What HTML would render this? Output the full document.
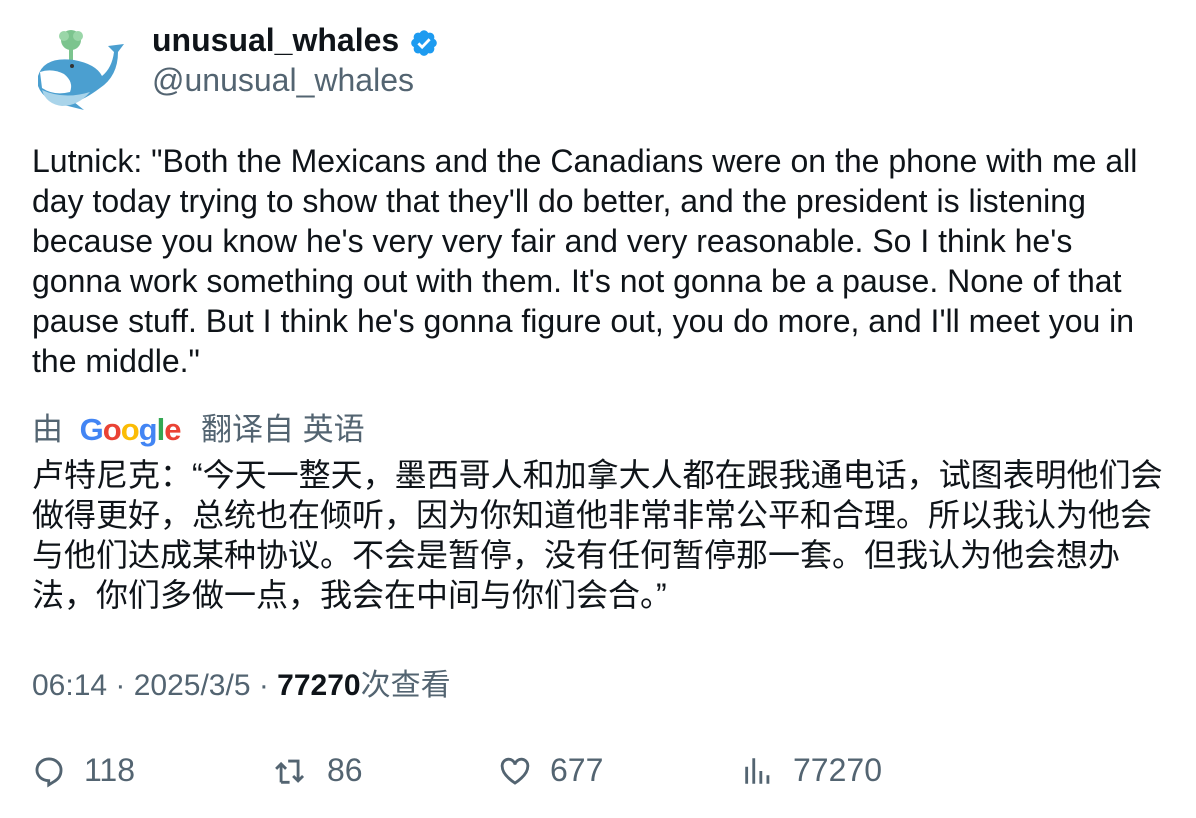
<!DOCTYPE html>
<html><head><meta charset="utf-8"><style>
body{margin:0;background:#fff;width:1196px;height:818px;overflow:hidden;font-family:"Liberation Sans","Noto Sans CJK SC",sans-serif;color:#0f1419}
.abs{position:absolute;white-space:nowrap}
.g{color:#536471}
.body{position:absolute;left:32px;top:141px;width:1112px;font-size:32px;line-height:40px}
.zh{position:absolute;left:32px;top:455px;width:1140px;font-size:32px;line-height:40px}
.st{position:absolute;top:752px;font-size:32px;color:#536471;display:flex;align-items:center;gap:18px}
</style></head><body>
<svg class="abs" style="left:34px;top:26px" width="92" height="84" viewBox="0 0 92 84">
<circle cx="37" cy="14" r="10" fill="#7cc48e"/><circle cx="30" cy="10" r="5" fill="#9ad6a8"/><circle cx="44" cy="10" r="5" fill="#9ad6a8"/>
<rect x="35" y="20" width="4" height="14" fill="#7cc48e"/>
<path d="M4 50 Q10 30 40 34 Q62 38 68 50 Q78 42 80 26 L74 20 L90 18 L84 26 Q84 50 66 62 Q50 74 40 76 L50 84 L34 80 Q10 76 4 60 Z" fill="#4b9fd0"/>
<path d="M6 46 Q18 42 30 48 Q40 56 36 66 Q20 70 8 62 Z" fill="#fff"/>
<path d="M8 64 Q30 74 56 66 Q44 80 28 80 Q12 78 8 64Z" fill="#a9d4ea"/>
<circle cx="38" cy="40" r="2" fill="#333"/>
</svg>
<div class="abs" style="left:152px;top:22px;font-size:32px;font-weight:bold">unusual_whales</div>
<svg class="abs" style="left:409px;top:28px" width="30" height="30" viewBox="0 0 24 24"><path fill="#1d9bf0" d="M22.25 12c0-1.430-.88-2.670-2.190-3.340.46-1.390.2-2.900-.81-3.910s-2.520-1.270-3.910-.81c-.66-1.310-1.910-2.190-3.340-2.190s-2.670.88-3.330 2.190c-1.400-.46-2.910-.2-3.920.81s-1.260 2.520-.8 3.910c-1.310.67-2.200 1.910-2.200 3.340s.89 2.670 2.200 3.340c-.46 1.390-.21 2.900.8 3.910s2.520 1.260 3.910.81c.67 1.310 1.910 2.190 3.340 2.190s2.680-.88 3.340-2.190c1.390.45 2.900.2 3.910-.81s1.270-2.520.81-3.910c1.310-.67 2.190-1.910 2.190-3.340z"/><path d="M7.5 12.3l3 3 6-6.3" stroke="#fff" stroke-width="2.2" fill="none"/></svg>
<div class="abs g" style="left:152px;top:62px;font-size:32px">@unusual_whales</div>
<div class="body">Lutnick: "Both the Mexicans and the Canadians were on the phone with me all day today trying to show that they'll do better, and the president is listening because you know he's very very fair and very reasonable. So I think he's gonna work something out with them. It's not gonna be a pause. None of that pause stuff. But I think he's gonna figure out, you do more, and I'll meet you in the middle."</div>
<div class="abs g" style="left:32px;top:404px;font-size:31px">由 <span style="font-weight:bold;font-size:31px;letter-spacing:-1px;margin:0 12px 0 8px"><span style="color:#4285f4">G</span><span style="color:#ea4335">o</span><span style="color:#fbbc05">o</span><span style="color:#4285f4">g</span><span style="color:#34a853">l</span><span style="color:#ea4335">e</span></span> 翻译自 英语</div>
<div class="zh">卢特尼克：“今天一整天，墨西哥人和加拿大人都在跟我通电话，试图表明他们会做得更好，总统也在倾听，因为你知道他非常非常公平和合理。所以我认为他会与他们达成某种协议。不会是暂停，没有任何暂停那一套。但我认为他会想办法，你们多做一点，我会在中间与你们会合。”</div>
<div class="abs g" style="left:32px;top:660px;font-size:30px">06:14 · 2025/3/5 · <b style="color:#0f1419">77270</b>次查看</div>
<div class="st" style="left:32px"><svg width="34" height="34" viewBox="0 0 24 24" fill="none" stroke="#536471" stroke-width="2"><path d="M12 3.5c-4.7 0-8.5 3.4-8.5 7.8 0 4.2 3.6 7.5 8.3 7.5v3l4-2.5c2.6-1.5 4.7-4.2 4.7-8 0-4.4-3.800-7.800-8.500-7.800z"/></svg>118</div>
<div class="st" style="left:273px"><svg width="36" height="34" viewBox="0 0 24 24" fill="none" stroke="#536471" stroke-width="2"><path d="M5 20V7M1.5 10.5L5 7l3.5 3.5M10 5h7v14M13.5 15.5L17 19l3.5-3.5M5 20h6"/></svg>86</div>
<div class="st" style="left:498px"><svg width="34" height="34" viewBox="0 0 24 24" fill="none" stroke="#536471" stroke-width="2"><path d="M12 20.5S3 15 3 9a4.5 4.5 0 0 1 9-1.5A4.5 4.5 0 0 1 21 9c0 6-9 11.5-9 11.5z"/></svg>677</div>
<div class="st" style="left:741px"><svg width="34" height="34" viewBox="0 0 24 24" stroke="#536471" stroke-width="2"><path d="M4 21V9M9 21V3M14 21V12M19 21V15"/></svg>77270</div>
</body></html>
